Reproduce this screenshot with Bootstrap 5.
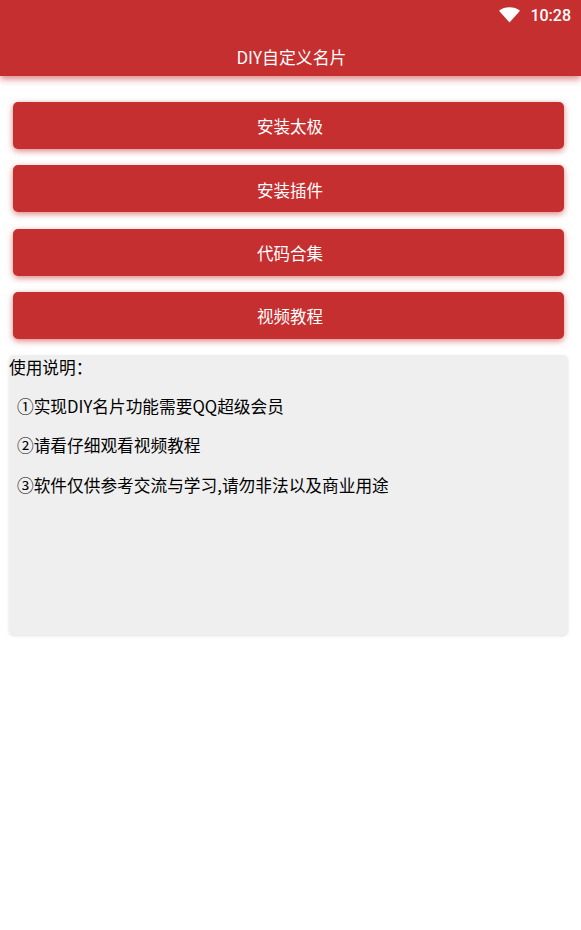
<!DOCTYPE html>
<html lang="zh"><head><meta charset="utf-8">
<link href="https://cdn.jsdelivr.net/npm/bootstrap@5.3.0/dist/css/bootstrap.min.css" rel="stylesheet">
<style>
body{background:#fff;font-family:"Noto Sans CJK SC","Noto Sans",sans-serif;color:#000;height:930px;overflow:hidden}
.app-head{background:#c62f2f;height:76px;box-shadow:0 3px 7px rgba(198,47,47,.6);color:#fff}
.status-row{height:31px;padding-right:10px;gap:10px;font-family:Roboto,sans-serif;font-size:16px;font-weight:500}
.status-row svg{margin-bottom:2px}
.title-row{height:45px;font-size:16.9px;padding:14px 0 0 2px;line-height:24px}
.main-wrap{padding:26px 17px 0 13px}
.act-btn{background:#c62f2f;color:#fff;border:0;border-radius:5px;height:47px;font-size:16.5px;box-shadow:0 2px 6px rgba(198,47,47,.6);margin-bottom:16.4px;width:100%;padding:2px 0 0 3px}
.act-btn:hover{background:#c62f2f;color:#fff}
.note-box{background:#efefef;border-radius:5px;height:280px;margin:-1px 13px 0 9px;font-size:16.7px;box-shadow:0 1px 3px rgba(0,0,0,.12);line-height:24px}
.note-box p{margin:0 0 15.4px 8px}
.note-box p:first-child{margin-left:0}
</style></head><body>
<div class="app-head">
<div class="status-row d-flex justify-content-end align-items-center">
<svg width="21" height="17" viewBox="0 0 22 17"><path d="M0 4.500C3 2 6.800.8 11 .8s8 1.200 11 3.700L11 17z" fill="#fff"/></svg><span>10:28</span></div>
<div class="title-row text-center">DIY自定义名片</div>
</div>
<div class="main-wrap">
<button class="btn act-btn d-block">安装太极</button>
<button class="btn act-btn d-block">安装插件</button>
<button class="btn act-btn d-block">代码合集</button>
<button class="btn act-btn d-block">视频教程</button>
</div>
<div class="note-box">
<p>使用说明：</p>
<p>①实现DIY名片功能需要QQ超级会员</p>
<p>②请看仔细观看视频教程</p>
<p>③软件仅供参考交流与学习,请勿非法以及商业用途</p>
</div>
<script src="https://cdn.jsdelivr.net/npm/bootstrap@5.3.0/dist/js/bootstrap.bundle.min.js"></script>
</body></html>
